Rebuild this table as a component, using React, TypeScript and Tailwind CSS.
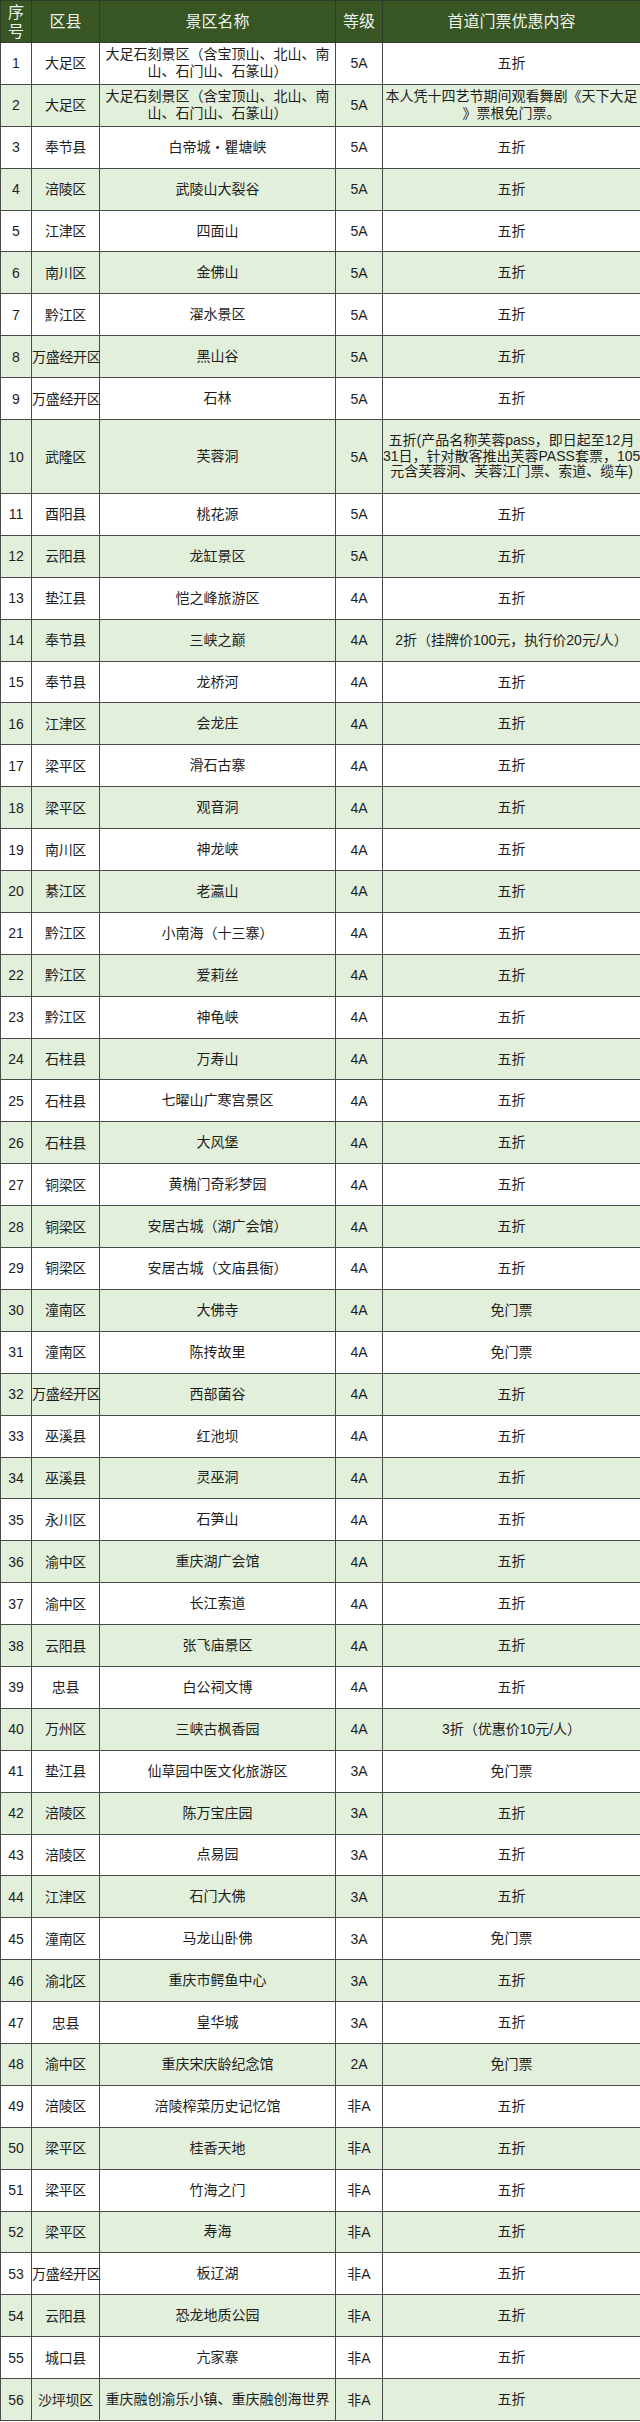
import React from 'react'

type Row = [string, string, string | string[], string, string | string[]]

const rows: Row[] = [
  ['1', '大足区', ['大足石刻景区（含宝顶山、北山、南', '山、石门山、石篆山）'], '5A', '五折'],
  ['2', '大足区', ['大足石刻景区（含宝顶山、北山、南', '山、石门山、石篆山）'], '5A', ['本人凭十四艺节期间观看舞剧《天下大足', '》票根免门票。']],
  ['3', '奉节县', '白帝城・瞿塘峡', '5A', '五折'],
  ['4', '涪陵区', '武陵山大裂谷', '5A', '五折'],
  ['5', '江津区', '四面山', '5A', '五折'],
  ['6', '南川区', '金佛山', '5A', '五折'],
  ['7', '黔江区', '濯水景区', '5A', '五折'],
  ['8', '万盛经开区', '黑山谷', '5A', '五折'],
  ['9', '万盛经开区', '石林', '5A', '五折'],
  ['10', '武隆区', '芙蓉洞', '5A', ['五折(产品名称芙蓉pass，即日起至12月', '31日，针对散客推出芙蓉PASS套票，105', '元含芙蓉洞、芙蓉江门票、索道、缆车)']],
  ['11', '酉阳县', '桃花源', '5A', '五折'],
  ['12', '云阳县', '龙缸景区', '5A', '五折'],
  ['13', '垫江县', '恺之峰旅游区', '4A', '五折'],
  ['14', '奉节县', '三峡之巅', '4A', '2折（挂牌价100元，执行价20元/人）'],
  ['15', '奉节县', '龙桥河', '4A', '五折'],
  ['16', '江津区', '会龙庄', '4A', '五折'],
  ['17', '梁平区', '滑石古寨', '4A', '五折'],
  ['18', '梁平区', '观音洞', '4A', '五折'],
  ['19', '南川区', '神龙峡', '4A', '五折'],
  ['20', '綦江区', '老瀛山', '4A', '五折'],
  ['21', '黔江区', '小南海（十三寨）', '4A', '五折'],
  ['22', '黔江区', '爱莉丝', '4A', '五折'],
  ['23', '黔江区', '神龟峡', '4A', '五折'],
  ['24', '石柱县', '万寿山', '4A', '五折'],
  ['25', '石柱县', '七曜山广寒宫景区', '4A', '五折'],
  ['26', '石柱县', '大风堡', '4A', '五折'],
  ['27', '铜梁区', '黄桷门奇彩梦园', '4A', '五折'],
  ['28', '铜梁区', '安居古城（湖广会馆）', '4A', '五折'],
  ['29', '铜梁区', '安居古城（文庙县衙）', '4A', '五折'],
  ['30', '潼南区', '大佛寺', '4A', '免门票'],
  ['31', '潼南区', '陈抟故里', '4A', '免门票'],
  ['32', '万盛经开区', '西部菌谷', '4A', '五折'],
  ['33', '巫溪县', '红池坝', '4A', '五折'],
  ['34', '巫溪县', '灵巫洞', '4A', '五折'],
  ['35', '永川区', '石笋山', '4A', '五折'],
  ['36', '渝中区', '重庆湖广会馆', '4A', '五折'],
  ['37', '渝中区', '长江索道', '4A', '五折'],
  ['38', '云阳县', '张飞庙景区', '4A', '五折'],
  ['39', '忠县', '白公祠文博', '4A', '五折'],
  ['40', '万州区', '三峡古枫香园', '4A', '3折（优惠价10元/人）'],
  ['41', '垫江县', '仙草园中医文化旅游区', '3A', '免门票'],
  ['42', '涪陵区', '陈万宝庄园', '3A', '五折'],
  ['43', '涪陵区', '点易园', '3A', '五折'],
  ['44', '江津区', '石门大佛', '3A', '五折'],
  ['45', '潼南区', '马龙山卧佛', '3A', '免门票'],
  ['46', '渝北区', '重庆市鳄鱼中心', '3A', '五折'],
  ['47', '忠县', '皇华城', '3A', '五折'],
  ['48', '渝中区', '重庆宋庆龄纪念馆', '2A', '免门票'],
  ['49', '涪陵区', '涪陵榨菜历史记忆馆', '非A', '五折'],
  ['50', '梁平区', '桂香天地', '非A', '五折'],
  ['51', '梁平区', '竹海之门', '非A', '五折'],
  ['52', '梁平区', '寿海', '非A', '五折'],
  ['53', '万盛经开区', '板辽湖', '非A', '五折'],
  ['54', '云阳县', '恐龙地质公园', '非A', '五折'],
  ['55', '城口县', '亢家寨', '非A', '五折'],
  ['56', '沙坪坝区', '重庆融创渝乐小镇、重庆融创海世界', '非A', '五折'],
]

function Lines({ v }: { v: string | string[] }) {
  if (typeof v === 'string') return <>{v}</>
  return (
    <>
      {v.map((l, i) => (
        <div key={i} className="whitespace-nowrap">{l}</div>
      ))}
    </>
  )
}

const th = 'border-[1.5px] border-[#2f3a28] bg-[#375623] text-[#eef2ea] font-normal text-[16px] leading-[19px] text-center align-middle'
const td = 'border-[1.5px] border-[#4a4a4a] text-center align-middle px-0 whitespace-nowrap overflow-visible'

export default function App() {
  return (
    <div className="w-[640px] bg-white" style={{ fontFamily: '"Liberation Sans", "Noto Sans CJK SC", sans-serif' }}>
      <table className="w-[640px] table-fixed border-collapse text-[14px] leading-[16px] text-[#1e1e1e]">
        <colgroup>
          <col className="w-[31px]" />
          <col className="w-[68px]" />
          <col className="w-[236px]" />
          <col className="w-[47px]" />
          <col className="w-[258px]" />
        </colgroup>
        <thead>
          <tr className="h-[42px]">
            <th className={th}>序<br />号</th>
            <th className={th}>区县</th>
            <th className={th}>景区名称</th>
            <th className={th}>等级</th>
            <th className={th}>首道门票优惠内容</th>
          </tr>
        </thead>
        <tbody>
          {rows.map((r, i) => {
            const tall = r[0] === '10'
            return (
              <tr key={r[0]} className={(i % 2 === 1 ? 'bg-[#e2efda] ' : 'bg-white ') + (tall ? 'h-[74px]' : 'h-[41.9px]')}>
                <td className={td}>{r[0]}</td>
                <td className={td + ' tracking-[-0.3px]'}>{r[1]}</td>
                <td className={td + ' leading-[17px]'}><Lines v={r[2]} /></td>
                <td className={td}>{r[3]}</td>
                <td className={td + (tall ? ' leading-[15.7px]' : ' leading-[17px]')}><Lines v={r[4]} /></td>
              </tr>
            )
          })}
        </tbody>
      </table>
    </div>
  )
}
